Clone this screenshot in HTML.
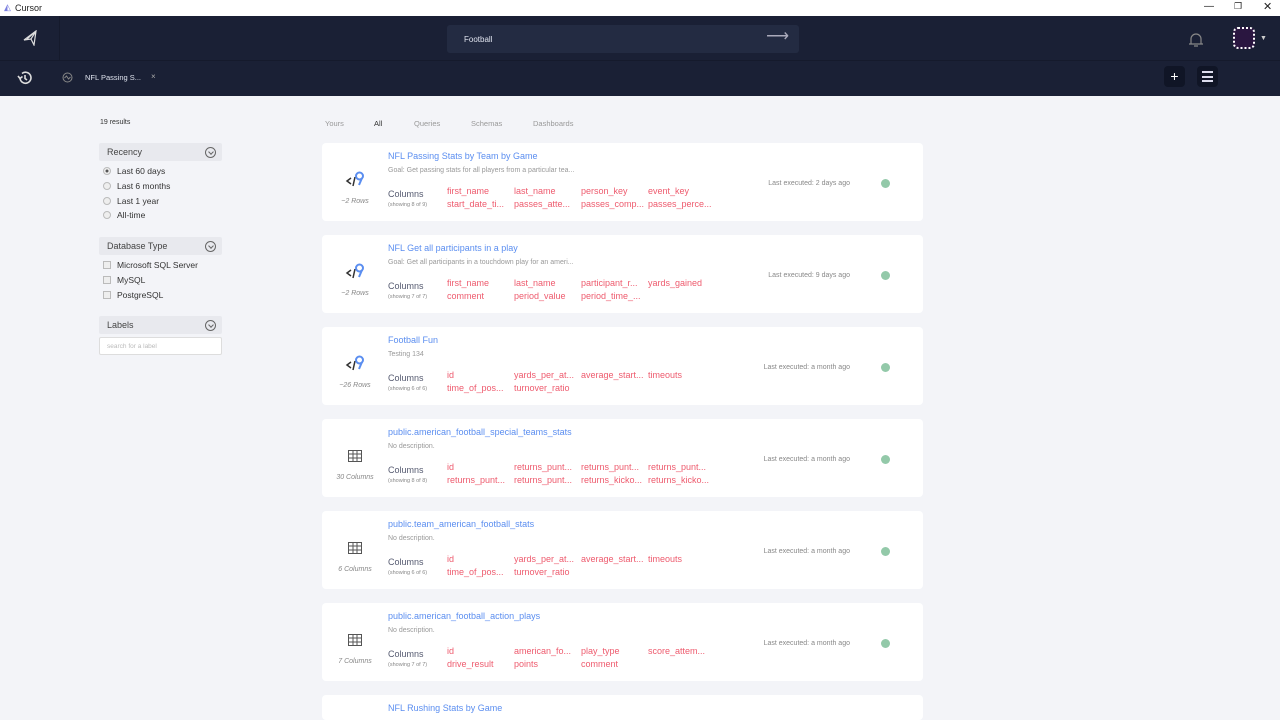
<!DOCTYPE html>
<html><head><style>
*{margin:0;padding:0;box-sizing:border-box}
html,body{width:1280px;height:720px;overflow:hidden}
body{background:#f3f4f8;font-family:"Liberation Sans",sans-serif;position:relative}
.abs{position:absolute}
.tb{top:0;left:0;width:1280px;height:16px;background:#fff;font-size:9px;color:#222}
.hd{top:16px;left:0;width:1280px;height:80px;background:#1a2035}
.search{left:447px;top:9px;width:352px;height:28px;background:#232b42;border-radius:3px;color:#dfe3ee;font-size:8px;padding:10px 17px}
.card{left:322px;width:601px;height:78px;background:#fff;border-radius:4px;overflow:hidden}
.t{left:66px;top:8px;font-size:9px;color:#5b8ef0;white-space:nowrap}
.d{left:66px;top:24px;font-size:7px;color:#999;white-space:nowrap}
.cl{left:66px;top:46px;font-size:9px;color:#555a70}
.sh{left:66px;top:59px;font-size:5.5px;color:#888}
.c{font-size:9px;color:#ee5b6e;white-space:nowrap}
.rw{left:0;width:66px;text-align:center;top:55px;font-size:7px;color:#888;font-style:italic}
.le{right:73px;top:37px;font-size:7px;color:#888;white-space:nowrap}
.dot{left:559px;top:36px;width:9px;height:9px;border-radius:50%;background:#93c9a9}
.sec{left:99px;width:123px;height:18px;background:#e8e9ee;border-radius:2px;font-size:9px;color:#444;padding:4px 8px}
.sec i{position:absolute;right:6px;top:4px;width:11px;height:11px;border:1px solid #666;border-radius:50%}
.sec i:after{content:"";position:absolute;left:3px;top:2px;width:3px;height:3px;border-right:1px solid #666;border-bottom:1px solid #666;transform:rotate(45deg)}
.opt{left:103px;font-size:8.5px;color:#333;white-space:nowrap}
.opt b{display:inline-block;width:8px;height:8px;border:1px solid #bbb;background:#eee;margin-right:6px;vertical-align:-1px}
.tab{top:119px;font-size:7.5px;color:#999}
</style></head><body>
<div class="abs tb"><span style="position:absolute;left:4px;top:2px;color:#7b7fe0">◭</span><span style="position:absolute;left:15px;top:3px">Cursor</span>
<span style="position:absolute;left:1204px;top:1px;font-size:10px">—</span><span style="position:absolute;left:1234px;top:1px;font-size:9px">❐</span><span style="position:absolute;left:1263px;top:0px;font-size:11px">✕</span></div>
<div class="abs hd">
<div class="abs" style="left:0;top:44px;width:1280px;height:1px;background:#151a2c"></div>
<div class="abs" style="left:59px;top:0;width:1px;height:44px;background:#151a2c"></div>
<svg class="abs" style="left:22px;top:14px" width="16" height="16" viewBox="0 0 16 16"><path d="M14 1 L2 10 L9 9 L12 15 Z M5 9 L14 1 M9 9 L14 1" fill="none" stroke="#ddd" stroke-width="1.2"/></svg>
<svg class="abs" style="left:17px;top:54px" width="16" height="16" viewBox="0 0 16 16"><path d="M3 8 A5.5 5.5 0 1 0 5 3.5 M1 6 L3 8.5 L5.5 6.5 M8 5 V8.5 L10 10" fill="none" stroke="#ddd" stroke-width="1.6"/></svg>
<svg class="abs" style="left:62px;top:56px" width="11" height="11"><circle cx="5.5" cy="5.5" r="4.5" fill="none" stroke="#888"/><path d="M2.5 6 L4.5 4 L6.5 7 L8.5 5" fill="none" stroke="#888"/></svg>
<div class="abs" style="left:85px;top:57px;font-size:7.5px;color:#dfe3ee">NFL Passing S...</div>
<div class="abs" style="left:151px;top:56px;font-size:8px;color:#aaa">×</div>
<svg class="abs" style="left:1187px;top:15px" width="18" height="18"><path d="M4 13 V8 A5 5 0 0 1 14 8 V13 Z M2 13 H16 M7 15 H11" fill="none" stroke="#888" stroke-width="1.2"/></svg>
<div class="abs" style="left:1233px;top:11px;width:22px;height:22px;background:#2a1640;border:2px dotted #fff;border-radius:5px"></div>
<div class="abs" style="left:1260px;top:19px;font-size:7px;color:#ccc">▼</div>
<div class="abs" style="left:1164px;top:50px;width:21px;height:21px;background:#101526;border-radius:4px;color:#fff;font-size:14px;text-align:center;line-height:20px">+</div>
<div class="abs" style="left:1197px;top:50px;width:21px;height:21px;background:#101526;border-radius:4px"><div style="margin:5px 5px;height:11px;border-top:2px solid #dde;border-bottom:2px solid #dde;position:relative"><div style="position:absolute;top:2.5px;left:0;right:0;border-top:2px solid #dde"></div></div></div>
<div class="abs search">Football<span style="position:absolute;right:10px;top:5px;font-size:16px;color:#aab;line-height:14px">⟶</span></div>
</div>

<div class="abs" style="left:100px;top:119px;font-size:7px;color:#333">19 results</div>
<div class="abs sec" style="top:143px">Recency<i></i></div>
<div class="abs opt" style="top:166px"><b style="border-radius:50%;background:radial-gradient(#555 30%,#eee 40%)"></b>Last 60 days</div>
<div class="abs opt" style="top:181px"><b style="border-radius:50%"></b>Last 6 months</div>
<div class="abs opt" style="top:196px"><b style="border-radius:50%"></b>Last 1 year</div>
<div class="abs opt" style="top:210px"><b style="border-radius:50%"></b>All-time</div>
<div class="abs sec" style="top:237px">Database Type<i></i></div>
<div class="abs opt" style="top:260px"><b></b>Microsoft SQL Server</div>
<div class="abs opt" style="top:275px"><b></b>MySQL</div>
<div class="abs opt" style="top:290px"><b></b>PostgreSQL</div>
<div class="abs sec" style="top:316px">Labels<i></i></div>
<div class="abs" style="left:99px;top:337px;width:123px;height:18px;background:#fff;border:1px solid #ddd;border-radius:2px;font-size:6.5px;color:#bbb;padding:5px 7px">search for a label</div>

<div class="abs tab" style="left:325px">Yours</div>
<div class="abs tab" style="left:374px;color:#333">All</div>
<div class="abs tab" style="left:414px">Queries</div>
<div class="abs tab" style="left:471px">Schemas</div>
<div class="abs tab" style="left:533px">Dashboards</div>

<div id="cards"></div>
<script>
const q='<svg class="abs" style="left:22px;top:27px" width="22" height="20"><path d="M7 8 L3 11 L7 14 M11 7 L9 16" fill="none" stroke="#333" stroke-width="1.5"/><circle cx="15.5" cy="6" r="3.5" fill="none" stroke="#5b8ef0" stroke-width="2"/><path d="M18 8 L15 15" stroke="#5b8ef0" stroke-width="2"/></svg>';
const g='<svg class="abs" style="left:26px;top:31px" width="14" height="12"><rect x="0.5" y="0.5" width="13" height="11" fill="none" stroke="#555"/><path d="M0 4H14M0 8H14M5 0V12M9 0V12" stroke="#555"/></svg>';
const data=[
[q,"~2 Rows","NFL Passing Stats by Team by Game","Goal: Get passing stats for all players from a particular tea...","8 of 9",["first_name","last_name","person_key","event_key","start_date_ti...","passes_atte...","passes_comp...","passes_perce..."],"2 days ago"],
[q,"~2 Rows","NFL Get all participants in a play","Goal: Get all participants in a touchdown play for an ameri...","7 of 7",["first_name","last_name","participant_r...","yards_gained","comment","period_value","period_time_..."],"9 days ago"],
[q,"~26 Rows","Football Fun","Testing 134","6 of 6",["id","yards_per_at...","average_start...","timeouts","time_of_pos...","turnover_ratio"],"a month ago"],
[g,"30 Columns","public.american_football_special_teams_stats","No description.","8 of 8",["id","returns_punt...","returns_punt...","returns_punt...","returns_punt...","returns_punt...","returns_kicko...","returns_kicko..."],"a month ago"],
[g,"6 Columns","public.team_american_football_stats","No description.","6 of 6",["id","yards_per_at...","average_start...","timeouts","time_of_pos...","turnover_ratio"],"a month ago"],
[g,"7 Columns","public.american_football_action_plays","No description.","7 of 7",["id","american_fo...","play_type","score_attem...","drive_result","points","comment"],"a month ago"],
[q,"","NFL Rushing Stats by Game","","",[],""]];
let h='';
data.forEach((d,i)=>{
let top=143+i*92;
let cols=d[5].map((c,j)=>`<div class="abs c" style="left:${125+(j%4)*67}px;top:${43+Math.floor(j/4)*13}px">${c}</div>`).join('');
h+=`<div class="abs card" style="top:${top}px${i==6?';height:25px':''}">${i<6?d[0]:''}<div class="abs rw">${d[1]}</div><div class="abs t">${d[2]}</div><div class="abs d">${d[3]}</div>${d[4]?`<div class="abs cl">Columns</div><div class="abs sh">(showing ${d[4]})</div>`:''}${cols}${d[6]?`<div class="abs le">Last executed: ${d[6]}</div><div class="abs dot"></div>`:''}</div>`;
});
document.getElementById('cards').innerHTML=h;
</script>
</body></html>
